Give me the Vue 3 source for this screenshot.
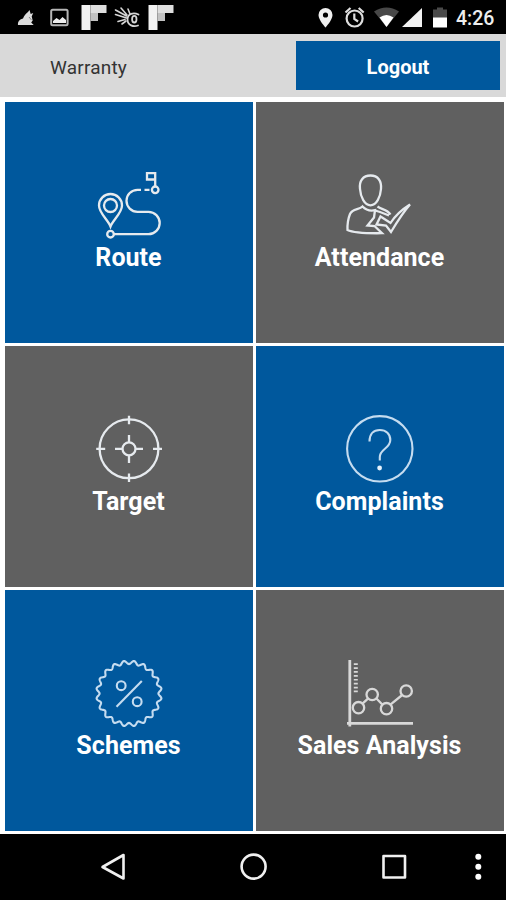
<template>
  <div class="screen">
    <div class="status-bar">
      <svg class="status-left" viewBox="0 0 190 34">
        <path d="M18 25c-.3-3 1-5.500 5-6.500 1-3 3-5 5-6.500l1.500-2 1.200 4 2.500-1-1.500 3.500 1 4-1.500 2 2.500 2.500z" fill="#dcdcdc" />
        <path d="M29 17l2.500 3" stroke="#888" stroke-width="1" />
        <rect x="51.200" y="9.700" width="16.400" height="15.600" rx="1.500" fill="none" stroke="#b5b5b5" stroke-width="2" />
        <path d="M53 23v-2l3.500-3 3 2 3-3 3.500 3v3z" fill="#eee" />
        <g v-for="x in [81.500, 148.500]" :key="x" :transform="`translate(${x} 5)`">
          <path d="M0 0h9v25H0z" fill="#f2f2f2" />
          <path d="M9 0h16v8H9z" fill="#dedede" />
          <path d="M9 8h7.500v8H9z" fill="#c2c2c2" />
        </g>
        <g fill="none" stroke="#d6d6d6" stroke-width="1.600" stroke-linecap="round">
          <path d="M115.500 10l11 6M121 8l6 7M128 9l2 5M115.500 14.500l11 3.500M118 21.500l7-2M122 24l4-3" />
          <path d="M138.500 14.500c-5-2.500-11-1-11 5 0 6 6 7.500 10.500 6" stroke-width="1.800" />
          <ellipse cx="134.300" cy="19.200" rx="2.200" ry="3.300" stroke-width="1.800" />
        </g>
      </svg>
      <svg class="status-right" viewBox="310 0 142 34">
        <path d="M325.500 8a7 7 0 0 0-7 7c0 5 7 12.500 7 12.500s7-7.500 7-12.500a7 7 0 0 0-7-7zm0 4.400a2.600 2.600 0 1 1 0 5.200 2.600 2.600 0 0 1 0-5.200z" fill="#f0f0f0" />
        <g fill="none" stroke="#dedede" stroke-width="2.200">
          <circle cx="354.600" cy="18.500" r="8" />
          <path d="M354.300 13.500v5.500l3.800 2.500" />
          <path d="M345.500 12.500l5-4.500M363.700 12.500l-5-4.500" />
        </g>
        <path d="M374 11.500q12.500-8 25 0L386.500 27z" fill="#484848" />
        <path d="M379.500 17.500q7-5 14 0L386.500 27z" fill="#fff" />
        <path d="M422 8v19h-20z" fill="#f2f2f2" />
        <path d="M433 9.500h4V7.500h6v2h4V18h-14z" fill="#4a4a4a" />
        <path d="M433 17.500h14V27.500h-14z" fill="#fff" />
      </svg>
      <span class="clock">4:26</span>
    </div>

    <header class="header">
      <span class="title">Warranty</span>
      <button class="logout">Logout</button>
    </header>

    <main class="grid">
      <div v-for="tile in tiles" :key="tile.name" class="tile" :class="tile.color">
        <svg class="icon" viewBox="0 0 72 72">
          <g v-if="tile.name === 'Route'">
            <path d="M17.500 57.500C15 51 6 44 6 36.500a11.500 11.500 0 0 1 23 0C29 44 20 51 17.500 57.500z" />
            <circle cx="17.500" cy="36.500" r="6.500" />
            <circle cx="17.500" cy="65.200" r="3.300" />
            <path d="M21 65.200h34.500a11.200 11.200 0 0 0 0-22.400H44.500a11 11 0 0 1 0-22H48M51.500 20.800h5" />
            <circle cx="62.200" cy="20.800" r="3.300" />
            <path d="M62.200 17.500V4.200H54v6.300h8" />
          </g>
          <g v-else-if="tile.name === 'Attendance'">
            <path d="M26.500 6.500C19 6.500 15 12 16 20c.6 8 4.500 16.300 10.500 16.300S36.400 28 37 20c.7-8-3-13.500-10.500-13.500z" />
            <path d="M38 64.200c-14 .2-28.500-.2-34.500-3.200C3.300 56 4 50 6 45c2.500-5.500 9-4 12.500-7.500 3.500 3.700 7.500 4.700 12.500 3.700l-1 7.300-6.500 8 7 .5z" />
            <path d="M33.500 37.500c4 3.200 9.500 2.500 13 8M31 41.500l5 1.500 9 3.500" />
            <path d="M32.500 55.500l4-8 10 6.500C51 47 58 40.500 66 35.500 58.500 44 53 53 47 63l-5-6.500z" />
          </g>
          <g v-else-if="tile.name === 'Target'">
            <circle cx="36" cy="35.800" r="29.400" />
            <circle cx="36" cy="35.800" r="6.500" />
            <path d="M3.200 35.800h9M60 35.800h9M36 2.800v8.500M36 60.500V69M22 35.800h7.500M42.500 35.800H50M36 22v7.500M36 42.300V50" />
          </g>
          <g v-else-if="tile.name === 'Complaints'" class="thin">
            <circle cx="35.800" cy="35.800" r="32.700" />
            <path d="M25.500 28.500c0-7.500 4-11.500 10.300-11.500S46.300 21 46.300 27c0 8.500-10.500 9-10.500 17v3.500" />
            <circle class="solid" cx="35.600" cy="55" r="2.400" />
          </g>
          <g v-else-if="tile.name === 'Schemes'" class="thin">
            <path :d="badgePath" />
            <circle cx="28.200" cy="28.700" r="4.400" />
            <circle cx="44.200" cy="44.700" r="4.400" />
            <path d="M23.500 49.700L48.800 24" />
          </g>
          <g v-else class="chart">
            <path d="M5.800 3v66.500M3 66.300h66" stroke-width="2.800" />
            <path d="M11.800 6.300v29.500" stroke-width="4" stroke-dasharray="1.700 2.200" />
            <path d="M18.500 46.700l5.700-5.400M32.200 41.300l6.300 6.400M46.400 47.600L58.200 38" />
            <circle v-for="(p, i) in points" :key="i" :cx="p[0]" :cy="p[1]" r="5.700" />
          </g>
        </svg>
        <span class="label">{{ tile.name }}</span>
      </div>
    </main>

    <nav class="nav-bar">
      <svg viewBox="0 834 506 66">
        <g fill="none" stroke="#f0f0f0" stroke-width="2.600" stroke-linejoin="round">
          <path d="M123.500 855v23.500L102.500 867z" />
          <circle cx="253.600" cy="866.600" r="12" />
          <rect x="383.500" y="856" width="21.500" height="21.500" />
        </g>
        <circle v-for="y in [856.800, 866.800, 876.800]" :key="y" cx="478.300" :cy="y" r="3" fill="#fff" />
      </svg>
    </nav>
  </div>
</template>

<script setup>
const tiles = [
  { name: 'Route', color: 'blue' },
  { name: 'Attendance', color: 'gray' },
  { name: 'Target', color: 'gray' },
  { name: 'Complaints', color: 'blue' },
  { name: 'Schemes', color: 'blue' },
  { name: 'Sales Analysis', color: 'gray' },
];

const points = [[14.5, 50.7], [28.2, 37.5], [42.5, 51.7], [62.2, 34]];

// wavy badge outline with 20 scallops
const steps = 400;
const badgePath = Array.from({ length: steps }, (_, i) => {
  const a = (i / steps) * Math.PI * 2;
  const r = 31.1 - 1.7 * Math.cos(a * 20);
  const x = (36 + r * Math.sin(a)).toFixed(2);
  const y = (36.5 - r * Math.cos(a)).toFixed(2);
  return `${i ? 'L' : 'M'}${x} ${y}`;
}).join('') + 'Z';
</script>

<style>
body {
  margin: 0;
}
</style>

<style scoped>
.screen {
  display: flex;
  flex-direction: column;
  width: 506px;
  height: 900px;
  overflow: hidden;
  background: #fff;
  font-family: Roboto, 'Liberation Sans', sans-serif;
}

.status-bar {
  display: flex;
  justify-content: space-between;
  height: 34px;
  background: #000;
}

.status-left {
  width: 190px;
  height: 34px;
}

.status-right {
  width: 142px;
  height: 34px;
  margin-left: auto;
}

.clock {
  width: 54px;
  padding-left: 4px;
  box-sizing: border-box;
  color: #eee;
  font-size: 19.5px;
  font-weight: 500;
  line-height: 37px;
}

.header {
  display: flex;
  justify-content: space-between;
  align-items: center;
  box-sizing: border-box;
  height: 63px;
  padding: 0 6px 0 50px;
  background: #d9d9d9;
}

.title {
  padding-top: 3px;
  color: #333;
  font-size: 19px;
  letter-spacing: 0.2px;
}

.logout {
  width: 204px;
  height: 49px;
  padding: 3px 0 0;
  border: none;
  background: #00589d;
  color: #fff;
  font-family: inherit;
  font-size: 20px;
  font-weight: 700;
}

.grid {
  display: grid;
  flex: 1;
  grid-template-columns: 1fr 1fr;
  grid-template-rows: repeat(3, 1fr);
  gap: 3px;
  padding: 4.5px 2.5px 2.5px 4.5px;
}

.tile {
  display: flex;
  flex-direction: column;
  align-items: center;
  box-sizing: border-box;
  padding-top: 67px;
}

.blue {
  background: #00589d;
}

.gray {
  background: #606060;
}

.icon {
  width: 72px;
  height: 72px;
  fill: none;
  stroke: #e6eaee;
  stroke-width: 2.3;
}

.thin {
  stroke: #c5dcf0;
  stroke-width: 2.1;
}

.chart {
  stroke: #d8d8d8;
}

.solid {
  fill: #e6f2fc;
  stroke: none;
}

.label {
  color: #fff;
  font-size: 25px;
  font-weight: 700;
  letter-spacing: 0.05px;
  line-height: 34px;
}

.nav-bar {
  height: 66.5px;
  background: #000;
}

.nav-bar svg {
  display: block;
  width: 506px;
  height: 66px;
}
</style>
